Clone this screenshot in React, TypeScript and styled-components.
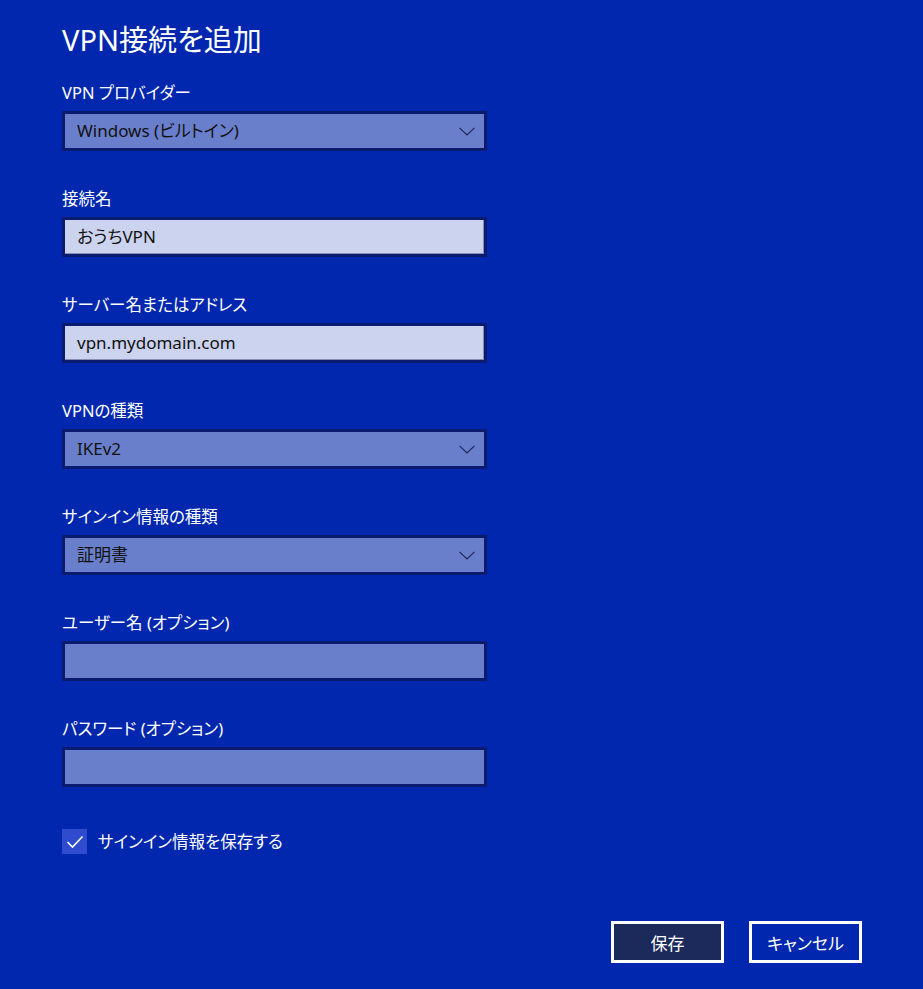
import React from 'react'
import styled, { createGlobalStyle } from 'styled-components'

const GlobalStyle = createGlobalStyle`
  html, body {
    margin: 0;
    padding: 0;
    background: #0027ae;
  }
  body {
    font-family: "Noto Sans", "Noto Sans CJK JP", sans-serif;
    font-feature-settings: "palt";
    color: #ffffff;
  }
`

const fields = [
  { label: 'VPN プロバイダー', kind: 'select', value: 'Windows (ビルトイン)' },
  { label: '接続名', kind: 'text', value: 'おうちVPN' },
  { label: 'サーバー名またはアドレス', kind: 'text', value: 'vpn.mydomain.com' },
  { label: 'VPNの種類', kind: 'select', value: 'IKEv2' },
  { label: 'サインイン情報の種類', kind: 'select', value: '証明書' },
  { label: 'ユーザー名 (オプション)', kind: 'empty', value: '' },
  { label: 'パスワード (オプション)', kind: 'empty', value: '' },
]

const Chevron = () => (
  <svg width="16" height="9" viewBox="0 0 16 9">
    <path d="M0.5 0.8 L8 8 L15.5 0.8" fill="none" stroke="#1d2550" strokeWidth="1.1" />
  </svg>
)

const Check = () => (
  <svg width="18" height="14" viewBox="0 0 18 14">
    <path d="M1.5 7 L6.5 12 L16.5 1.5" fill="none" stroke="#ffffff" strokeWidth="1.6" />
  </svg>
)

export default () => {
  return (
    <Page>
      <GlobalStyle />
      <Title>VPN接続を追加</Title>

      <Form>
        {fields.map((f) => (
          <Field key={f.label}>
            <Label>{f.label}</Label>
            <Box $kind={f.kind}>
              <Value>{f.value}</Value>
              {f.kind === 'select' && <Chevron />}
            </Box>
          </Field>
        ))}
      </Form>

      <CheckRow>
        <CheckBox>
          <Check />
        </CheckBox>
        <CheckLabel>サインイン情報を保存する</CheckLabel>
      </CheckRow>

      <Buttons>
        <Button $primary>保存</Button>
        <Button>キャンセル</Button>
      </Buttons>
    </Page>
  )
}

const Page = styled.div`
  width: 923px;
  height: 989px;
  box-sizing: border-box;
  padding: 22px 61px 0 62px;
  background: #0027ae;
`

const Title = styled.h1`
  margin: 0;
  font-size: 29px;
  font-weight: 400;
  line-height: 36px;
`

const Form = styled.div`
  display: flex;
  flex-direction: column;
  gap: 37px;
  margin-top: 24px;
  width: 425px;
`

const Field = styled.div`
  display: flex;
  flex-direction: column;
  gap: 7px;
`

const Label = styled.div`
  font-size: 16.5px;
  line-height: 22px;
`

const Box = styled.div<{ $kind: string }>`
  height: 40px;
  box-sizing: border-box;
  display: flex;
  align-items: center;
  justify-content: space-between;
  padding: 0 9px 0 12px;
  border: 3px solid #0b1c70;
  background: ${({ $kind }) => ($kind === 'text' ? '#cbd3ee' : '#6a7fcb')};
  box-shadow: ${({ $kind }) => ($kind === 'text' ? 'inset -1px -1px 0 #8790b4' : 'none')};
  color: #111111;
`

const Value = styled.span`
  font-size: 17px;
  line-height: 22px;
`

const CheckRow = styled.div`
  display: flex;
  align-items: center;
  gap: 11px;
  margin-top: 42px;
`

const CheckBox = styled.div`
  width: 25px;
  height: 25px;
  display: flex;
  align-items: center;
  justify-content: center;
  background: #2f4ccf;
`

const CheckLabel = styled.span`
  font-size: 16.5px;
  line-height: 22px;
`

const Buttons = styled.div`
  display: flex;
  justify-content: flex-end;
  gap: 25px;
  margin-top: 67px;
`

const Button = styled.button<{ $primary?: boolean }>`
  width: 113px;
  height: 42px;
  box-sizing: border-box;
  border: 3px solid #ffffff;
  background: ${({ $primary }) => ($primary ? '#1b2a5b' : '#0027ae')};
  color: #ffffff;
  font-family: inherit;
  font-feature-settings: "palt";
  font-size: 17px;
  padding: 0;
`
